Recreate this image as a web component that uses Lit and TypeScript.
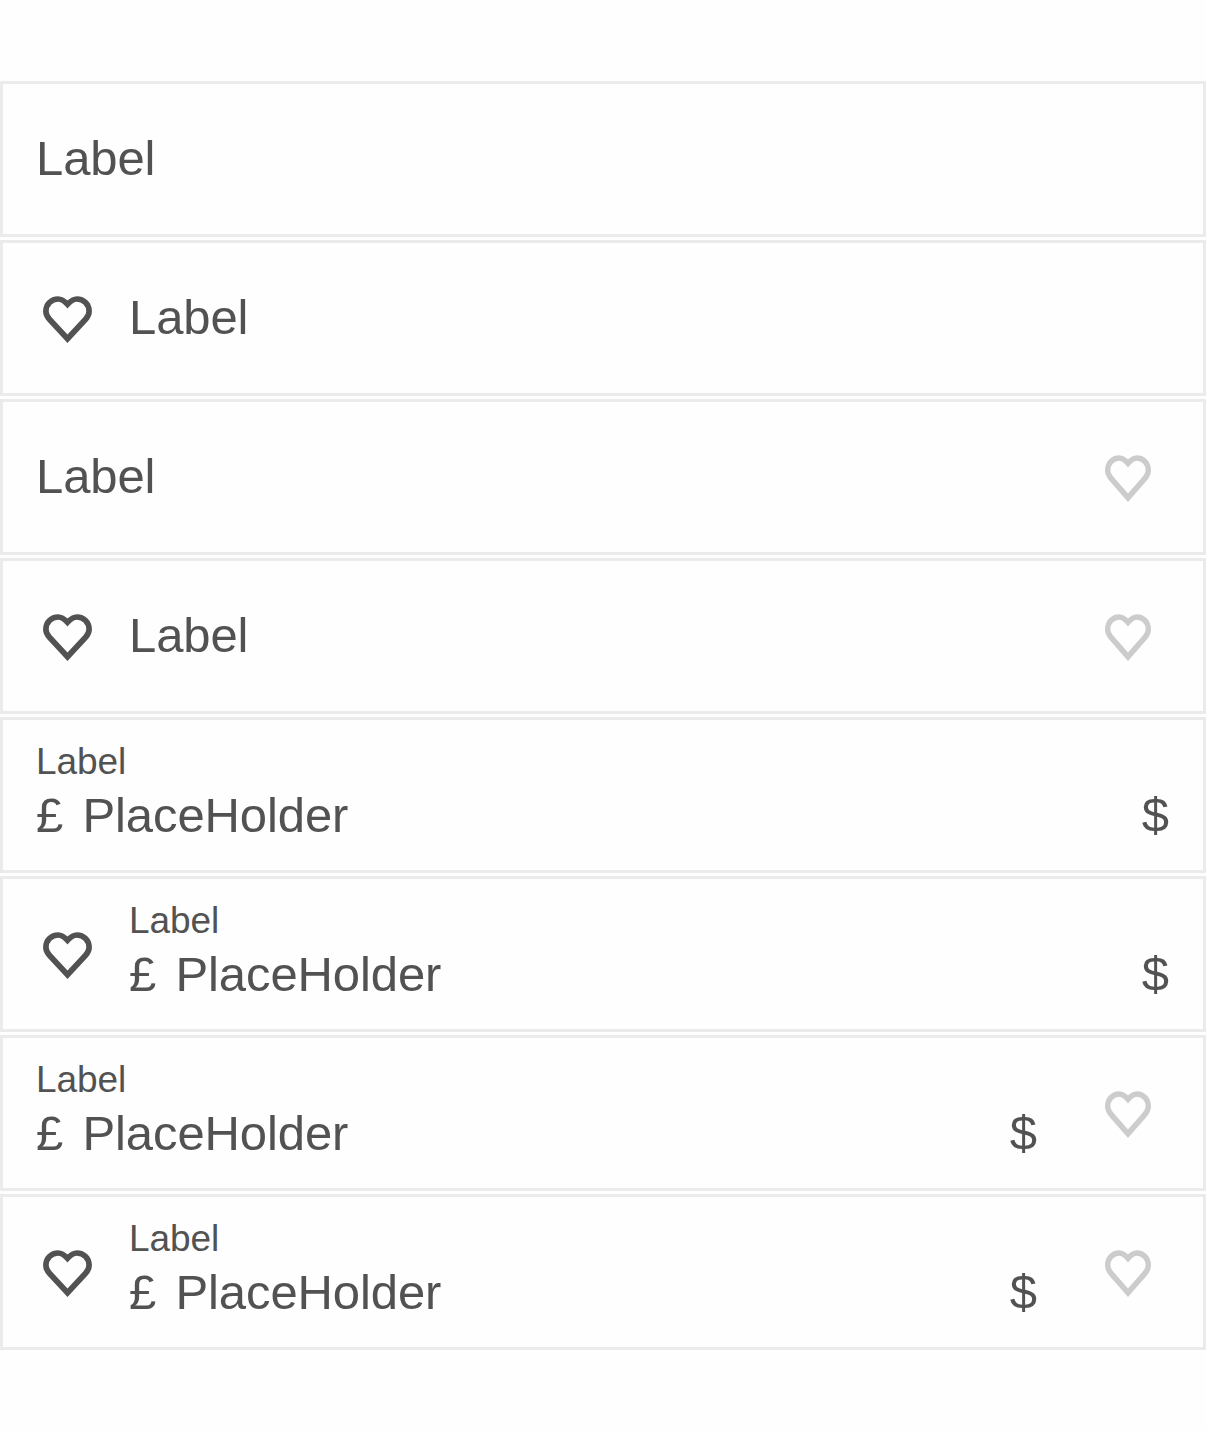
import { LitElement, html, css, nothing } from "lit";
import { customElement, property } from "lit/decorators.js";

@customElement("heart-icon")
class HeartIcon extends LitElement {
  static styles = css`
    :host { display: block; height: 52px; }
    .heart { display: block; width: 100%; height: 100%; }
    .line { fill: none; stroke: currentColor; stroke-width: 5.7; stroke-linejoin: miter; }
  `;
  render() {
    return html`<svg class="heart" viewBox="-0.5 -3.5 51 52" preserveAspectRatio="none" aria-hidden="true">
      <path class="line" d="M25 8.8C22.3 6 19.6 3.5 15.6 3.5C8.8 3.5 3.4 8.9 3.4 15.7C3.4 19 4.6 21.2 6.9 23.7L25 43.2L43.1 23.7C45.4 21.2 46.6 19 46.6 15.7C46.6 8.9 41.2 3.5 34.4 3.5C30.4 3.5 27.7 6 25 8.8Z"/>
    </svg>`;
  }
}

@customElement("field-row")
class FieldRow extends LitElement {
  @property({ type: Boolean }) leading = false;
  @property({ type: Boolean }) trailing = false;
  @property({ type: Boolean }) filled = false;

  static styles = css`
    :host {
      display: flex;
      align-items: center;
      box-sizing: border-box;
      height: 156px;
      padding: 0 33px;
      border: 3px solid #ebebeb;
      background: #fefefe;
      color: #525252;
    }
    .leading { flex: none; width: 51px; margin: 0 36px 0 6px; color: #525252; }
    .trailing { flex: none; width: 48px; margin: 0 18px 0 66px; color: #cccccc; }
    .body { flex: 1; min-width: 0; }
    .large { font-size: 49px; line-height: 60px; letter-spacing: -0.1px; }
    .single { padding-bottom: 3px; }
    .double { padding-bottom: 7px; }
    .small { margin-bottom: 1px; font-size: 37px; line-height: 45px; letter-spacing: -0.1px; }
    .value { display: flex; }
    .prefix { width: 46.5px; }
    .placeholder { flex: 1; }
    .suffix { padding-right: 1px; }
  `;

  render() {
    return html`
      ${this.leading ? html`<heart-icon class="leading"></heart-icon>` : nothing}
      ${this.filled
        ? html`<div class="body double">
            <div class="small">Label</div>
            <div class="value large">
              <span class="prefix">£</span>
              <span class="placeholder">PlaceHolder</span>
              <span class="suffix">$</span>
            </div>
          </div>`
        : html`<div class="body single large">Label</div>`}
      ${this.trailing ? html`<heart-icon class="trailing"></heart-icon>` : nothing}
    `;
  }
}

@customElement("app-root")
class AppRoot extends LitElement {
  static styles = css`
    :host {
      display: flex;
      flex-direction: column;
      gap: 3px;
      box-sizing: border-box;
      min-height: 1431px;
      padding-top: 81px;
      background: #fefefe;
      font-family: "Liberation Sans", Helvetica, Arial, sans-serif;
    }
  `;
  render() {
    return [false, true].map((filled) =>
      [false, true].map((trailing) =>
        [false, true].map(
          (leading) => html`<field-row ?filled=${filled} ?trailing=${trailing} ?leading=${leading}></field-row>`
        )
      )
    );
  }
}
